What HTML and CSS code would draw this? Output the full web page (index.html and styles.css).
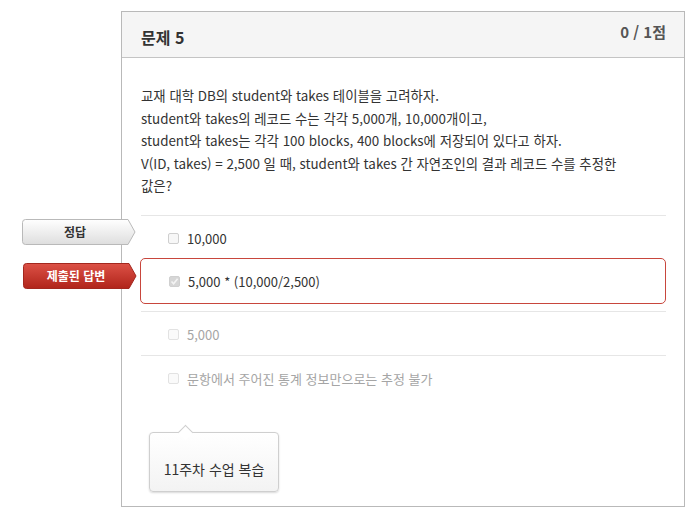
FILE: index.html
```html
<!DOCTYPE html>
<html lang="ko">

<head>
    <meta charset="UTF-8">
    <meta name="viewport" content="width=device-width, initial-scale=1.0">
    <title>quiz result</title>
    <link rel="stylesheet" href="styles.css">
</head>

<body>

    <!-- question card -->
    <div class="quiz">
        <div class="quiz-head">
            <h2 class="title">문제 5</h2>
            <span class="score">0 / 1점</span>
        </div>

        <div class="quiz-body">
            <p class="question">
                교재 대학 DB의 student와 takes 테이블을 고려하자.<br>
                student와 takes의 레코드 수는 각각 5,000개, 10,000개이고,<br>
                student와 takes는 각각 100 blocks, 400 blocks에 저장되어 있다고 하자.<br>
                V(ID, takes) = 2,500 일 때, student와 takes 간 자연조인의 결과 레코드 수를 추정한 값은?
            </p>

            <!-- answers -->
            <div class="answers">
                <div class="answer first">
                    <span class="tag tag-correct">
                        <svg width="114" height="26" viewBox="0 0 114 26">
                            <defs>
                                <linearGradient id="g1" x1="0" y1="0" x2="0" y2="1">
                                    <stop offset="0" stop-color="#ffffff" />
                                    <stop offset="1" stop-color="#dedede" />
                                </linearGradient>
                            </defs>
                            <path d="M3.5 0.5 H106 L113 13 L106 25.5 H3.5 Q0.5 25.5 0.5 22.5 V3.5 Q0.5 0.5 3.5 0.5 Z"
                                fill="url(#g1)" stroke="#b9b9b9" />
                        </svg>
                        <span class="tag-text">정답</span>
                    </span>
                    <span class="box"></span>
                    <span class="text">10,000</span>
                </div>

                <div class="answer selected">
                    <span class="tag tag-submitted">
                        <svg width="114" height="26" viewBox="0 0 114 26">
                            <defs>
                                <linearGradient id="g2" x1="0" y1="0" x2="0" y2="1">
                                    <stop offset="0" stop-color="#dc5146" />
                                    <stop offset="1" stop-color="#b0241a" />
                                </linearGradient>
                            </defs>
                            <path d="M3.5 0.5 H106 L113 13 L106 25.5 H3.5 Q0.5 25.5 0.5 22.5 V3.5 Q0.5 0.5 3.5 0.5 Z"
                                fill="url(#g2)" stroke="#a3271e" />
                        </svg>
                        <span class="tag-text">제출된 답변</span>
                    </span>
                    <span class="box checked">
                        <svg width="11" height="11" viewBox="0 0 11 11">
                            <path d="M2.5 5.5 L4.6 7.8 L8.6 2.8" fill="none" stroke="#f4f4f4" stroke-width="1.6" />
                        </svg>
                    </span>
                    <span class="text">5,000 * (10,000/2,500)</span>
                </div>

                <div class="answer muted">
                    <span class="box"></span>
                    <span class="text">5,000</span>
                </div>

                <div class="answer muted">
                    <span class="box"></span>
                    <span class="text">문항에서 주어진 통계 정보만으로는 추정 불가</span>
                </div>
            </div>

            <!-- feedback -->
            <div class="hint">11주차 수업 복습</div>
        </div>
    </div>

</body>

</html>
```

FILE: styles.css
```css
* {
    margin: 0;
    padding: 0;
    box-sizing: border-box;
}

body {
    background-color: #fff;
    font-family: "Noto Sans CJK KR", "Noto Sans", sans-serif;
    color: #333;
    padding-top: 11px;
}

.quiz {
    width: 564px;
    height: 496px;
    margin-left: 121px;
    border: 1px solid #b9b9b9;
}

.quiz-head {
    display: flex;
    justify-content: space-between;
    align-items: flex-start;
    height: 46px;
    padding: 0 18px 0 19px;
    background-color: #f5f5f5;
    border-bottom: 1px solid #c4c4c4;
}

.quiz-head .title {
    margin-top: 15px;
    font-size: 16px;
    line-height: 20px;
    font-weight: bold;
    color: #333;
}

.quiz-head .score {
    margin-top: 10px;
    font-size: 15px;
    line-height: 20px;
    font-weight: bold;
    color: #555;
}

.quiz-body {
    padding: 26px 18px 0 19px;
}

.question {
    padding-right: 20px;
    font-size: 13.4px;
    line-height: 22.5px;
    color: #333;
    word-break: keep-all;
    margin-bottom: 18px;
}

.answers .answer {
    position: relative;
    display: flex;
    align-items: center;
    height: 44px;
    padding: 2px 0 0 27px;
    border-top: 1px solid #e6e6e6;
    font-size: 13px;
}

.answers .answer.selected {
    height: 46px;
    margin: -1px 0 7px -1px;
    padding-left: 28px;
    border: 1px solid #c8463d;
    border-radius: 5px;
}

.answers .answer.muted {
    color: #a5a5a5;
}

.answers .answer.muted .box {
    border-color: #e2e2e2;
    background-color: #fafafa;
}

.box {
    display: inline-flex;
    width: 11px;
    height: 11px;
    margin-right: 8px;
    border: 1px solid #cfcfcf;
    border-radius: 2px;
    background-color: #f7f7f7;
}

.box.checked {
    border-color: #d0d0d0;
    background-color: #d6d6d6;
}

.box.checked svg {
    margin: -1px;
}

/* labels on the left of the card */
.tag {
    position: absolute;
    left: -119px;
    top: 3px;
    width: 114px;
    height: 26px;
}

.answer.selected .tag {
    left: -118px;
    top: 4px;
}

.tag svg {
    position: absolute;
    left: 0;
    top: 0;
}

.tag .tag-text {
    position: absolute;
    left: 0;
    top: 0;
    width: 106px;
    line-height: 25px;
    text-align: center;
    font-size: 12px;
    font-weight: bold;
}

.tag-correct .tag-text {
    color: #333;
}

.tag-submitted .tag-text {
    color: #fff;
}

/* feedback bubble */
.hint {
    position: relative;
    width: 130px;
    height: 60px;
    margin: 33px 0 0 8px;
    padding-top: 26px;
    border: 1px solid #cfcfcf;
    border-radius: 4px;
    background: linear-gradient(#fff, #f3f3f3);
    box-shadow: 0 1px 2px rgba(0, 0, 0, 0.15);
    font-size: 14px;
    line-height: 20px;
    text-align: center;
    color: #333;
}

.hint::before {
    content: "";
    position: absolute;
    left: 30px;
    top: -6px;
    width: 10px;
    height: 10px;
    background-color: #fff;
    border-left: 1px solid #cfcfcf;
    border-top: 1px solid #cfcfcf;
    transform: rotate(45deg);
}
```
